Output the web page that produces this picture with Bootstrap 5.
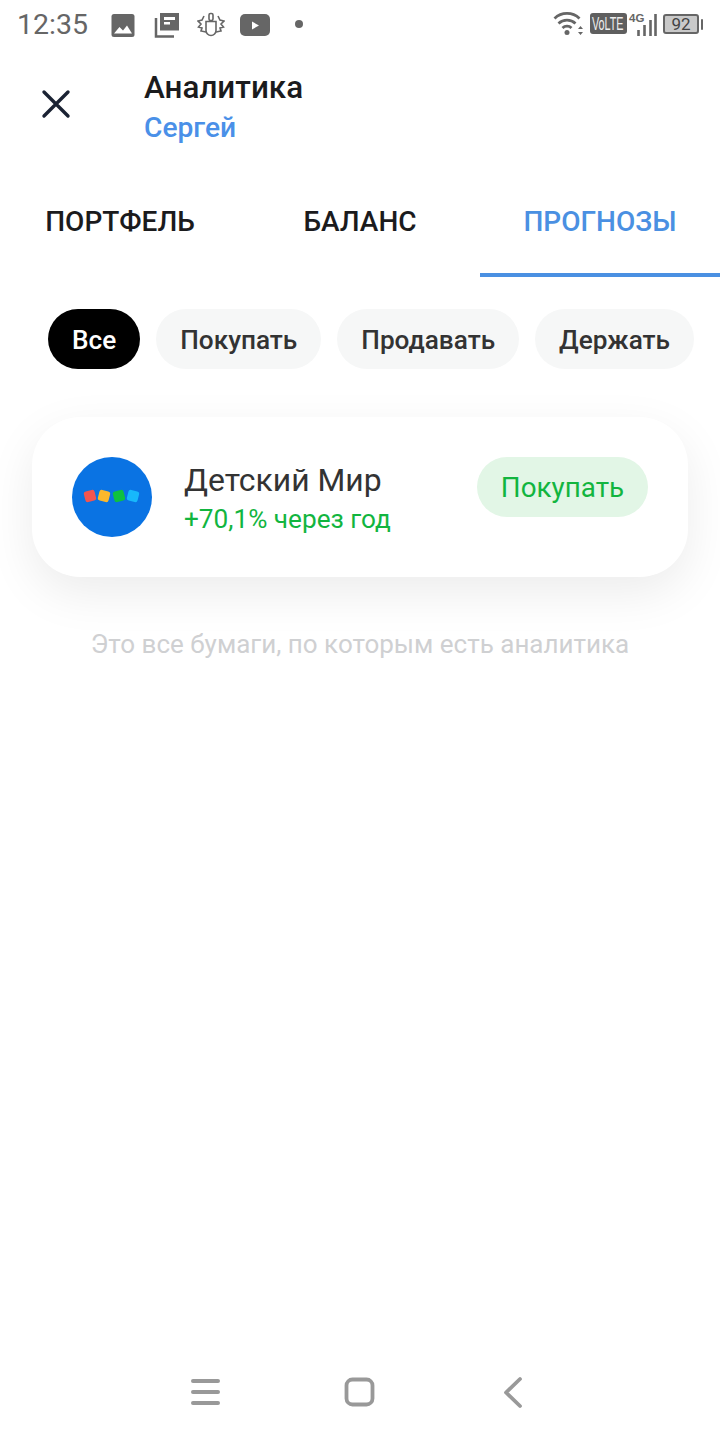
<!DOCTYPE html>
<html lang="ru">
<head>
<meta charset="utf-8">
<title>Аналитика</title>
<link href="https://cdn.jsdelivr.net/npm/bootstrap@5.3.0/dist/css/bootstrap.min.css" rel="stylesheet">
<style>
html,body{height:100%}
body{font-family:Roboto,"Noto Sans",sans-serif;background:#fff;width:720px;height:1440px;overflow:hidden}
.screen{width:720px;height:1440px;position:relative}
.statusbar{height:50px;padding:0 17px 0 17px;color:#666}
.clock{font-size:28.5px;line-height:50px;width:90px}
.st-icons svg{display:block}
.st-right{margin-left:auto}
.st-right svg{display:block}
.batt-box{width:36px;height:20px;border:2px solid #666;border-radius:3px;background:#c9c9c9;font-size:17px;line-height:16px;text-align:center;color:#444;margin-left:6px;margin-top:-2px}
.batt-tip{width:2px;height:11px;background:#666;margin-left:2px;border-radius:1px;margin-top:-2px}
.head{height:94px;padding-top:20px;padding-left:40px}
.head-close{width:32px;height:32px;margin-top:18px;margin-right:72px;flex:none}
.head-title{font-size:31.4px;font-weight:500;line-height:36px;color:#1b1b1d}
.head-sub{font-size:28.2px;font-weight:500;line-height:40px;margin-top:2px;color:#4a90e8}
.tabsrow{margin-top:45px}
.tabitem{width:240px;height:88px;text-align:center;font-size:28px;font-weight:500;line-height:32px;color:#1b1b1d;padding-top:17px}
.tabitem.on{color:#4a90e2;border-bottom:4px solid #4a90e2}
.chips{padding:32px 0 0 48px;gap:16px}
.chip{height:60px;border-radius:30px;padding:0 24px;background:#f6f7f7;color:#333;font-size:26.2px;font-weight:500;line-height:62px;white-space:nowrap}
.chip.on{background:#000;color:#fff}
.fcard{margin:48px 32px 0;height:160px;border-radius:48px;background:#fff;box-shadow:0 16px 48px rgba(0,0,0,.08);padding:40px}
.flogo{width:80px;height:80px;flex:none;display:block}
.ftext{margin-left:32px;flex:1}
.fname{font-size:31.9px;line-height:36px;color:#333;margin-top:5px}
.fsub{font-size:26.2px;line-height:32px;color:#12b53f;margin-top:5px}
.fbtn{width:171px;height:60px;border-radius:30px;background:#e2f6e6;color:#12b53f;font-size:27.8px;line-height:62px;text-align:center;flex:none}
.note{margin-top:49px;text-align:center;font-size:26px;line-height:36px;color:#cfd0d2}
.navsys{position:absolute;left:0;right:0;top:1372px;height:40px}
</style>
</head>
<body>
<div class="screen">
  <div class="statusbar d-flex align-items-center">
    <div class="clock">12:35</div>
    <div class="d-flex align-items-center st-icons">
      <svg width="24" height="24" viewBox="0 0 24 24" class="ms-1"><rect x="0.5" y="1" width="23" height="23" rx="2.5" fill="#666"/><path d="M3 20.5l5.5-6.5 3.5 3.500 4-5 5 8z" fill="#fff"/></svg>
      <svg width="26" height="26" viewBox="0 0 26 26" style="margin-left:19px"><path d="M6 1h19v17.500H6z" fill="#666"/><path d="M10 5h11v3H10zM10 10h6v2.500H10z" fill="#fff"/><path d="M2 6v18.500h18" fill="none" stroke="#666" stroke-width="2.500"/></svg>
      <svg width="28" height="26" viewBox="0 0 28 26" style="margin-left:17px" fill="none" stroke="#666" stroke-width="1.600"><rect x="12" y="1.500" width="4" height="7" rx="1.500"/><path d="M9 9.500h10v9a5 5 0 0 1-10 0z"/><path d="M7 4l-2 4-4 1 3 3-2.500 3 3.500 1-1 3 5 1M21 4l2 4 4 1-3 3 2.500 3-3.500 1 1 3-5 1"/></svg>
      <svg width="30" height="24" viewBox="0 0 30 24" style="margin-left:15px"><rect x="0" y="1" width="30" height="22" rx="5" fill="#666"/><path d="M12 8.500l7 4-7 4z" fill="#fff"/></svg>
      <svg width="10" height="10" viewBox="0 0 10 10" style="margin-left:24px;margin-top:-2px"><circle cx="5" cy="5" r="4" fill="#666"/></svg>
    </div>
    <div class="st-right d-flex align-items-center">
      <svg width="31" height="26" viewBox="0 0 31 26" fill="none" stroke="#666" stroke-width="2.800"><path d="M1.500 6.500a18 18 0 0 1 25 0M5.500 11.500a12.500 12.500 0 0 1 17 0M9.500 16a6.500 6.500 0 0 1 9 0"/><circle cx="14" cy="20.500" r="2.500" fill="#666" stroke="none"/><path d="M27.500 14l2.500 3h-5zM27.500 23l2.500-3h-5z" fill="#666" stroke="none"/></svg>
      <svg width="37" height="22" viewBox="0 0 37 22" style="margin-left:6px;margin-top:-2px"><rect width="37" height="21" rx="3" fill="#5f5f5f"/><text x="3.300" y="17" font-family="Liberation Sans,sans-serif" font-size="18" fill="#eee" transform="scale(.6 1)">VoLTE</text></svg>
      <svg width="30" height="26" viewBox="0 0 30 26" style="margin-top:-2px"><text x="2" y="11" font-family="Liberation Sans,sans-serif" font-size="11.500" font-weight="700" fill="#666">4G</text><path d="M11.500 25v-6M17.500 25V14M23.500 25V9M28.500 25V3" stroke="#666" stroke-width="2.600" fill="none"/></svg>
      <div class="batt-box">92</div>
      <div class="batt-tip"></div>
    </div>
  </div>

  <div class="head d-flex">
    <svg class="head-close" viewBox="0 0 32 32"><path d="M4 4l24 24M28 4L4 28" stroke="#1a2233" stroke-width="3.400" stroke-linecap="round" fill="none"/></svg>
    <div>
      <div class="head-title">Аналитика</div>
      <div class="head-sub">Сергей</div>
    </div>
  </div>

  <div class="tabsrow d-flex">
    <div class="tabitem">ПОРТФЕЛЬ</div>
    <div class="tabitem">БАЛАНС</div>
    <div class="tabitem on">ПРОГНОЗЫ</div>
  </div>

  <div class="chips d-flex">
    <div class="chip on">Все</div>
    <div class="chip">Покупать</div>
    <div class="chip">Продавать</div>
    <div class="chip">Держать</div>
  </div>

  <div class="fcard d-flex align-items-start">
    <svg class="flogo" viewBox="0 0 80 80"><circle cx="40" cy="40" r="40" fill="#0a73e3"/><rect x="12.500" y="33.500" width="11" height="11" rx="2.500" fill="#f4554f" transform="rotate(-14 18 39)"/><rect x="26.500" y="33.500" width="11" height="11" rx="2.500" fill="#fbb82d" transform="rotate(14 32 39)"/><rect x="41.500" y="33.500" width="11" height="11" rx="2.500" fill="#0fc13f" transform="rotate(-14 47 39)"/><rect x="55.500" y="33.500" width="11" height="11" rx="2.500" fill="#17b8fb" transform="rotate(14 61 39)"/></svg>
    <div class="ftext">
      <div class="fname">Детский Мир</div>
      <div class="fsub">+70,1% через год</div>
    </div>
    <div class="fbtn">Покупать</div>
  </div>

  <div class="note">Это все бумаги, по которым есть аналитика</div>

  <div class="navsys">
    <svg width="720" height="40" viewBox="0 0 720 40" fill="none" stroke="#999" stroke-linecap="round">
      <path d="M193 9h25M193 20h25M193 31h25" stroke-width="4"/>
      <rect x="346.500" y="7.500" width="26" height="25" rx="6" stroke-width="3.800"/>
      <path d="M520 7l-14 13.500L520 34" stroke-width="3.800" stroke-linejoin="round"/>
    </svg>
  </div>
</div>
</body>
</html>
